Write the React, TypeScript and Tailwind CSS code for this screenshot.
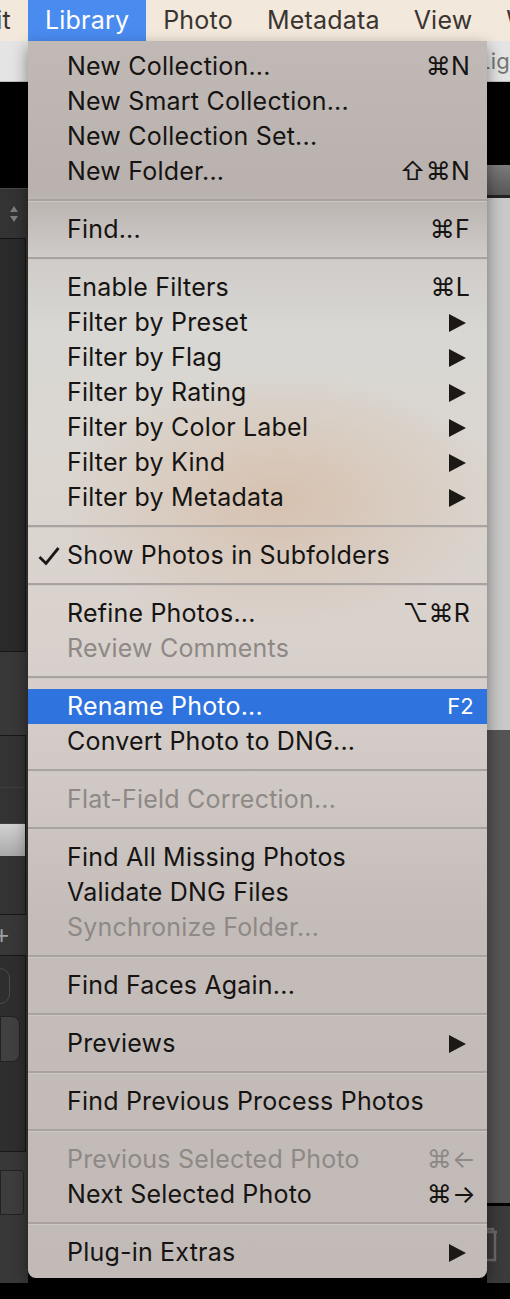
import React from "react";

type Item = {
  label: string;
  shortcut?: string;
  submenu?: boolean;
  disabled?: boolean;
  checked?: boolean;
  active?: boolean;
};

const GROUPS: Item[][] = [
  [
    { label: "New Collection...", shortcut: "⌘N" },
    { label: "New Smart Collection..." },
    { label: "New Collection Set..." },
    { label: "New Folder...", shortcut: "⇧⌘N" },
  ],
  [{ label: "Find...", shortcut: "⌘F" }],
  [
    { label: "Enable Filters", shortcut: "⌘L" },
    { label: "Filter by Preset", submenu: true },
    { label: "Filter by Flag", submenu: true },
    { label: "Filter by Rating", submenu: true },
    { label: "Filter by Color Label", submenu: true },
    { label: "Filter by Kind", submenu: true },
    { label: "Filter by Metadata", submenu: true },
  ],
  [{ label: "Show Photos in Subfolders", checked: true }],
  [
    { label: "Refine Photos...", shortcut: "⌥⌘R" },
    { label: "Review Comments", disabled: true },
  ],
  [
    { label: "Rename Photo...", shortcut: "F2", active: true },
    { label: "Convert Photo to DNG..." },
  ],
  [{ label: "Flat-Field Correction...", disabled: true }],
  [
    { label: "Find All Missing Photos" },
    { label: "Validate DNG Files" },
    { label: "Synchronize Folder...", disabled: true },
  ],
  [{ label: "Find Faces Again..." }],
  [{ label: "Previews", submenu: true }],
  [{ label: "Find Previous Process Photos" }],
  [
    { label: "Previous Selected Photo", shortcut: "⌘←", disabled: true },
    { label: "Next Selected Photo", shortcut: "⌘→" },
  ],
  [{ label: "Plug-in Extras", submenu: true }],
];

const MENUS = ["Library", "Photo", "Metadata", "View", "Window"];

function MenuRow({ item }: { item: Item }) {
  const color = item.active
    ? "text-white"
    : item.disabled
      ? "text-[#8e8986]"
      : "text-[#161412]";
  const arrow = item.shortcut?.endsWith("←") || item.shortcut?.endsWith("→");
  return (
    <div
      className={`h-[35px] flex items-center pr-[17px] ${color} ${
        item.active ? "bg-[#2f73df]" : ""
      }`}
    >
      <div className="w-[39px] flex items-center pl-[9px]">
        {item.checked && (
          <svg width="24" height="22" viewBox="0 0 24 22">
            <path
              d="M2.5 12 L9 18.5 L21.5 3"
              stroke="#1a1817"
              strokeWidth="2.8"
              fill="none"
            />
          </svg>
        )}
      </div>
      <span className="flex-1 whitespace-nowrap">{item.label}</span>
      {item.shortcut && (
        <span
          className={`whitespace-nowrap ${
            item.active ? "text-[22px] -mr-[4px]" : arrow ? "-mr-[6px]" : ""
          }`}
        >
          {item.shortcut}
        </span>
      )}
      {item.submenu && (
        <svg width="17" height="18" viewBox="0 0 17 18" className="mr-[4px]">
          <path d="M0 0 L17 9 L0 18 Z" fill="#1c1816" />
        </svg>
      )}
    </div>
  );
}

function LeftPanel() {
  return (
    <div className="w-[28px] flex flex-col bg-[#383838]">
      <div className="h-[106px] bg-black" />
      <div className="h-[50px] bg-[#333] border-t border-[#4a4a4a] flex items-center justify-center">
        <svg width="10" height="20" viewBox="0 0 10 20">
          <path d="M1 8 L5 2 L9 8 Z M1 12 L5 18 L9 12 Z" fill="#7d7d7d" />
        </svg>
      </div>
      <div className="h-[414px] pr-[2px]">
        <div className="h-full bg-[#2a2a2a] border-y border-r border-[#151515]" />
      </div>
      <div className="h-[83px]" />
      <div className="h-[180px] pr-[2px]">
        <div className="h-full bg-[#333] border-y border-r border-[#171717] flex flex-col pt-[18px]">
          <div className="h-[34px] border-b border-[#3f3f3f]" />
          <div className="h-[36px] border-b border-[#3f3f3f]" />
          <div className="h-[32px] bg-gradient-to-b from-[#d2d2d2] to-[#a9a9a9]" />
        </div>
      </div>
      <div className="h-[40px] flex items-center text-[26px] text-[#a0a0a0] leading-none font-['Liberation_Sans',sans-serif] -ml-[6px]">
        +
      </div>
      <div className="h-[197px] pr-[2px]">
        <div className="h-full bg-[#2e2e2e] border-y border-r border-[#171717] flex flex-col pt-[12px] gap-[12px]">
          <div className="w-[20px] h-[36px] -ml-[10px] rounded-full border border-[#4a4a4a]" />
          <div className="w-[20px] h-[46px] rounded-r-[8px] border border-[#222] bg-[#404040]" />
        </div>
      </div>
      <div className="h-[18px]" />
      <div className="h-[45px] pr-[4px]">
        <div className="h-full bg-[#3d3d3d] border border-[#222] rounded-r-[3px]" />
      </div>
      <div className="flex-1" />
      <div className="h-[16px] bg-black" />
    </div>
  );
}

function RightPanel() {
  return (
    <div className="w-[23px] flex flex-col bg-black">
      <div className="h-[83px]" />
      <div className="h-[30px] bg-gradient-to-b from-[#7b7b7b] to-[#585858]" />
      <div className="h-[3px] bg-[#222]" />
      <div className="h-[532px] bg-[#c9c9c9]" />
      <div className="h-[473px] bg-[#555]" />
      <div className="h-[3px] bg-black" />
      <div className="h-[77px] bg-[#3b3b3b] flex items-center">
        <svg width="18" height="38" viewBox="0 0 18 38" className="-ml-[6px]">
          <path
            d="M2 6 H16 M6 6 V3 H12 V6 M4 6 V34 H14 V6"
            stroke="#6a6a6a"
            strokeWidth="2.5"
            fill="none"
          />
        </svg>
      </div>
      <div className="flex-1" />
    </div>
  );
}

export default function App() {
  return (
    <div className="relative w-[510px] h-[1299px] overflow-hidden bg-black flex flex-col font-['Inter','Noto_Sans','DejaVu_Sans',sans-serif] tracking-[0.2px]">
      <div className="h-[41px] bg-[#f2e8db] flex overflow-hidden text-[25px] text-[#3a3531] whitespace-nowrap">
        <div className="w-[28px] shrink-0 flex justify-end items-center overflow-hidden">
          <span className="pr-[17px]">Edit</span>
        </div>
        {MENUS.map((m) => (
          <div
            key={m}
            className={`shrink-0 px-[17px] flex items-center ${
              m === "Library" ? "bg-[#4a8bf0] text-white" : ""
            }`}
          >
            {m}
          </div>
        ))}
      </div>
      <div className="h-[41px] bg-[#e4e4e4] border-b border-[#bdbdbd] overflow-hidden whitespace-nowrap pl-[478px] text-[22px] leading-[40px] text-[#747474]">
        Lightroom Classic
      </div>
      <div className="flex-1 flex">
        <LeftPanel />
        <div className="flex-1 bg-black" />
        <RightPanel />
      </div>

      <div className="absolute left-[28px] top-[41px] w-[459px] pt-[8px] pb-[8px] rounded-b-[8px] shadow-[0_6px_16px_rgba(0,0,0,0.45)] text-[25px] bg-[radial-gradient(ellipse_220px_130px_at_55%_37%,rgba(214,190,170,0.85),rgba(214,190,170,0)),linear-gradient(180deg,#c0b9b6_0px,#b8b1ae_150px,#cfcbc8_215px,#d8d7d3_290px,#dbd6d0_420px,#d9d1cc_600px,#cec7c3_760px,#c4bcb9_880px,#c2bab7_100%)]">
        {GROUPS.map((g, gi) => (
          <React.Fragment key={gi}>
            {gi > 0 && (
              <div className="h-[23px] flex flex-col justify-center">
                <div className="h-[2px] bg-[#a9a29f]" />
                <div className="h-px bg-[#cdc7c4]" />
              </div>
            )}
            {g.map((item) => (
              <MenuRow key={item.label} item={item} />
            ))}
          </React.Fragment>
        ))}
      </div>
    </div>
  );
}
